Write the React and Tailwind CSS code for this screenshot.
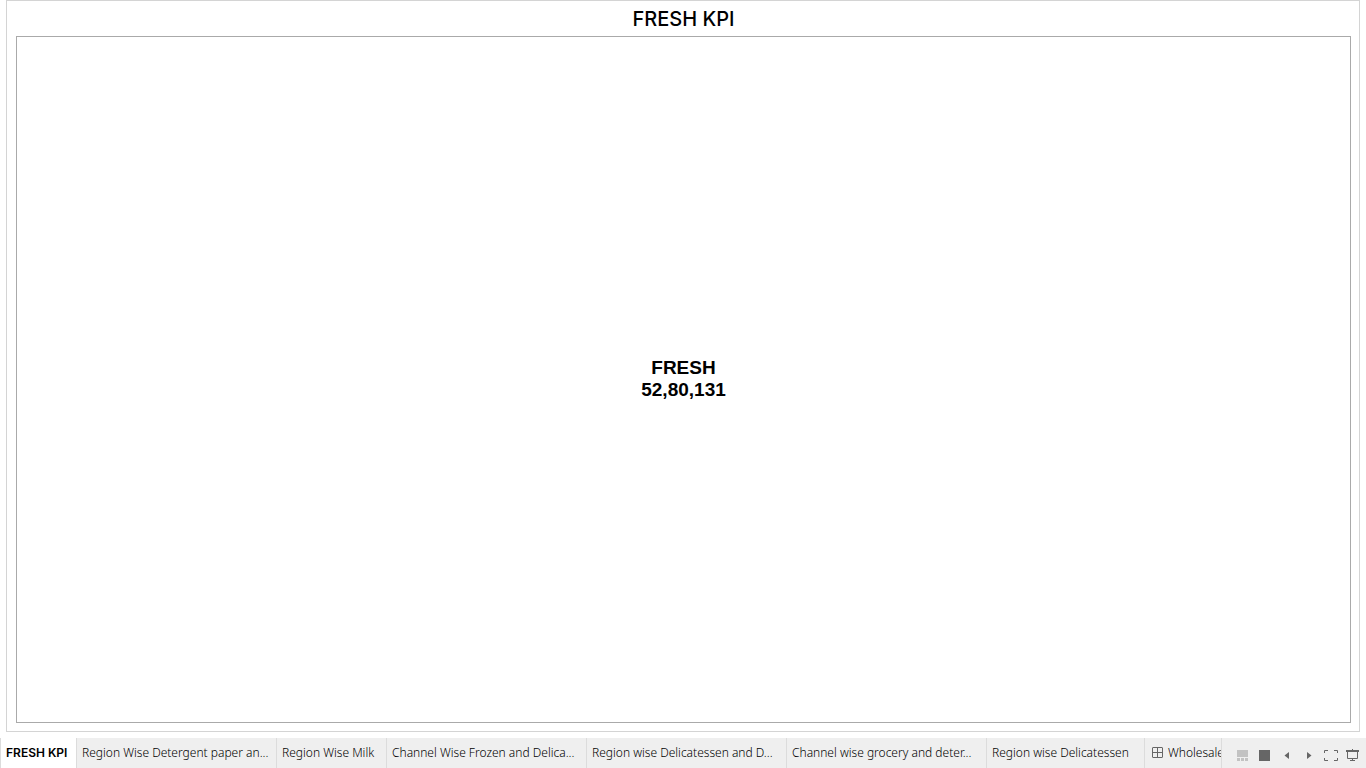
import { useState } from "react";

const tabs = [
  { label: "FRESH KPI", width: "w-[76px]" },
  { label: "Region Wise Detergent paper an...", width: "w-[200px]" },
  { label: "Region Wise Milk", width: "w-[110px]" },
  { label: "Channel Wise Frozen and Delica...", width: "w-[200px]" },
  { label: "Region wise Delicatessen and D...", width: "w-[200px]" },
  { label: "Channel wise grocery and deter...", width: "w-[200px]" },
  { label: "Region wise Delicatessen", width: "w-[158px]" },
  { label: "Wholesale", width: "w-[77px]", dashboard: true },
];

function DashboardIcon() {
  return (
    <svg className="mr-1 ml-0.5 h-3 w-3 shrink-0" viewBox="0 0 12 12" fill="none" stroke="#666" aria-hidden="true">
      <rect x="0.5" y="0.5" width="10" height="10" rx="0.5" />
      <path d="M5.5 0.5V10.5M0.5 5.5H10.5" />
    </svg>
  );
}

const controls = [
  {
    name: "Show filmstrip",
    art: <path fill="#c2c2c2" d="M2 2h11v7H2zM2 10h3v3H2zM6 10h3v3H6zM10 10h3v3h-3z" />,
  },
  { name: "Show tabs", art: <path fill="#666" d="M2 2h11v11H2z" /> },
  { name: "Previous sheet", art: <path fill="#666" d="M10 4v7L5.5 7.5z" /> },
  { name: "Next sheet", art: <path fill="#666" d="M6 4v7l4.5-3.5z" /> },
  {
    name: "Full screen",
    art: (
      <path
        fill="none"
        stroke="#666"
        d="M1.5 5V2.5H5M11 2.5h3.5V5M1.5 10v2.5H5M11 12.5h3.5V10"
      />
    ),
  },
  {
    name: "Presentation mode",
    art: (
      <g>
        <path d="M1 2h13v2H1zM7 1h1v1H7zM7 11h1v1H7zM5 12h5v1H5z" fill="#666" />
        <path d="M2.5 4v6.5h10V4" fill="none" stroke="#666" />
      </g>
    ),
  },
];

export default function App() {
  const [active, setActive] = useState(0);
  return (
    <div className="flex h-screen flex-col bg-white font-['Inter',sans-serif] text-black">
      <main className="mx-1.5 mb-1.5 flex min-h-0 flex-1 flex-col border border-[#d4d4d4] pr-2 pb-2 pl-[9px]">
        <h1 className="flex h-[35px] shrink-0 items-center justify-center text-xl font-medium">FRESH KPI</h1>
        <section className="flex flex-1 flex-col items-center justify-center border border-[#aaa] pb-0.5 font-['Liberation_Sans',Arial,sans-serif] text-[19px] leading-[22px] font-bold">
          <h2>FRESH</h2>
          <p>52,80,131</p>
        </section>
      </main>
      <footer className="flex h-[30px] shrink-0 bg-[#efefef]">
        <div className="flex min-w-0 flex-1 overflow-hidden border-l border-[#dcdcdc]" role="tablist">
          {tabs.map((tab, i) => (
            <button
              key={tab.label}
              type="button"
              role="tab"
              aria-selected={i === active}
              onClick={() => setActive(i)}
              className={`flex shrink-0 items-center overflow-hidden border-r border-[#dcdcdc] pl-[5px] text-xs whitespace-nowrap ${tab.width} ${
                i === active ? "bg-white font-semibold text-black" : "font-['Noto_Sans',sans-serif] font-light text-black"
              }`}
            >
              {tab.dashboard && <DashboardIcon />}
              {tab.label}
            </button>
          ))}
        </div>
        <div className="flex shrink-0 pt-1.5 pr-0.5">
          {controls.map((c) => (
            <button key={c.name} type="button" aria-label={c.name} className="flex w-[22px] items-center justify-center">
              <svg className="h-4 w-4" viewBox="0 0 16 16" aria-hidden="true">{c.art}</svg>
            </button>
          ))}
        </div>
      </footer>
    </div>
  );
}
